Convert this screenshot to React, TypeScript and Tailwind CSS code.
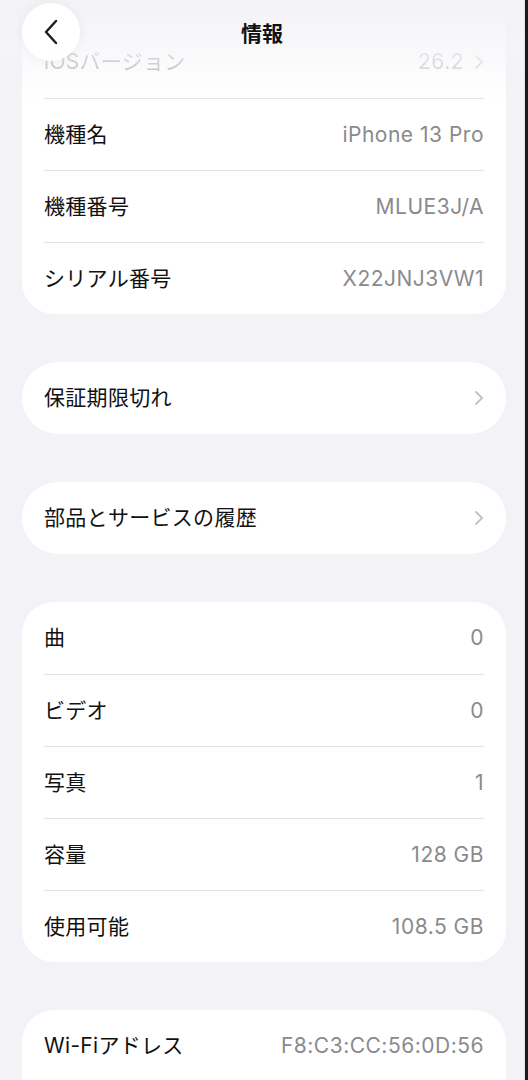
import { clsx } from "clsx";

type Row = { label: string; value?: string; chevron?: boolean; faded?: boolean };

const font = { fontFamily: '"Inter", "Noto Sans CJK JP", sans-serif' };

function Chevron({ className }: { className?: string }) {
  return (
    <svg width="10" height="16" viewBox="0 0 10 16" fill="none" className={className}>
      <path d="M2 2l6 6-6 6" stroke="currentColor" strokeWidth="2" strokeLinecap="round" strokeLinejoin="round" />
    </svg>
  );
}

function ListRow({ row, first }: { row: Row; first: boolean }) {
  return (
    <div className="px-[22px]">
      <div
        className={clsx(
          "h-[72px] flex items-center justify-between",
          !first && "border-t border-[#e3e3e7]"
        )}
      >
        <span
          className={clsx(
            "text-[21px] tracking-[0.3px]",
            row.faded ? "text-[#a8a8ac] blur-[0.6px]" : "text-[#111]"
          )}
        >
          {row.label}
        </span>
        <div className="flex items-center gap-[10px]">
          {row.value && (
            <span
              className={clsx(
                "text-[21px] tracking-[0.5px]",
                row.faded ? "text-[#c4c4c8] blur-[0.6px]" : "text-[#8a8a8e]"
              )}
            >
              {row.value}
            </span>
          )}
          {row.chevron && <Chevron className={row.faded ? "text-[#d8d8dc]" : "text-[#c4c4c7]"} />}
        </div>
      </div>
    </div>
  );
}

function Card({ rows, className }: { rows: Row[]; className?: string }) {
  return (
    <div className={clsx("bg-white w-[484px] ml-[22px]", className)}>
      {rows.map((r, i) => (
        <ListRow key={r.label} row={r} first={i === 0} />
      ))}
    </div>
  );
}

export default function App() {
  return (
    <div className="flex h-[1080px] w-[528px] overflow-hidden bg-[#f2f2f7]" style={font}>
      <div className="relative flex-1 border-r border-[#e4e4e9]">
        <div className="flex flex-col gap-[48px]">
          <Card
            className="pt-[26px] rounded-b-[32px]"
            rows={[
              { label: "iOSバージョン", value: "26.2", chevron: true, faded: true },
              { label: "機種名", value: "iPhone 13 Pro" },
              { label: "機種番号", value: "MLUE3J/A" },
              { label: "シリアル番号", value: "X22JNJ3VW1" },
            ]}
          />
          <Card className="rounded-[36px]" rows={[{ label: "保証期限切れ", chevron: true }]} />
          <Card className="rounded-[36px]" rows={[{ label: "部品とサービスの履歴", chevron: true }]} />
          <Card
            className="rounded-[32px]"
            rows={[
              { label: "曲", value: "0" },
              { label: "ビデオ", value: "0" },
              { label: "写真", value: "1" },
              { label: "容量", value: "128 GB" },
              { label: "使用可能", value: "108.5 GB" },
            ]}
          />
          <Card
            className="rounded-t-[32px] pb-[40px]"
            rows={[{ label: "Wi-Fiアドレス", value: "F8:C3:CC:56:0D:56" }]}
          />
        </div>

        {/* top blur / fade under nav */}
        <div className="absolute top-0 left-0 right-0 h-[100px] bg-gradient-to-b from-[#f2f2f7]/95 via-[#f6f6f9]/70 to-transparent" />

        <button className="absolute left-[22px] top-[3px] w-[58px] h-[58px] rounded-full bg-white/95 shadow-[0_0_12px_rgba(0,0,0,0.06)] flex items-center justify-center text-[#1c1c1e]">
          <svg width="16" height="26" viewBox="0 0 16 26" fill="none">
            <path d="M13 2L3 13l10 11" stroke="currentColor" strokeWidth="2.4" strokeLinecap="round" strokeLinejoin="round" />
          </svg>
        </button>
        <div className="absolute top-[18px] left-0 right-0 text-center text-[21px] font-bold text-[#111]">
          情報
        </div>
      </div>
      <div className="w-[3px] bg-[#1a1a1a]" />
    </div>
  );
}
